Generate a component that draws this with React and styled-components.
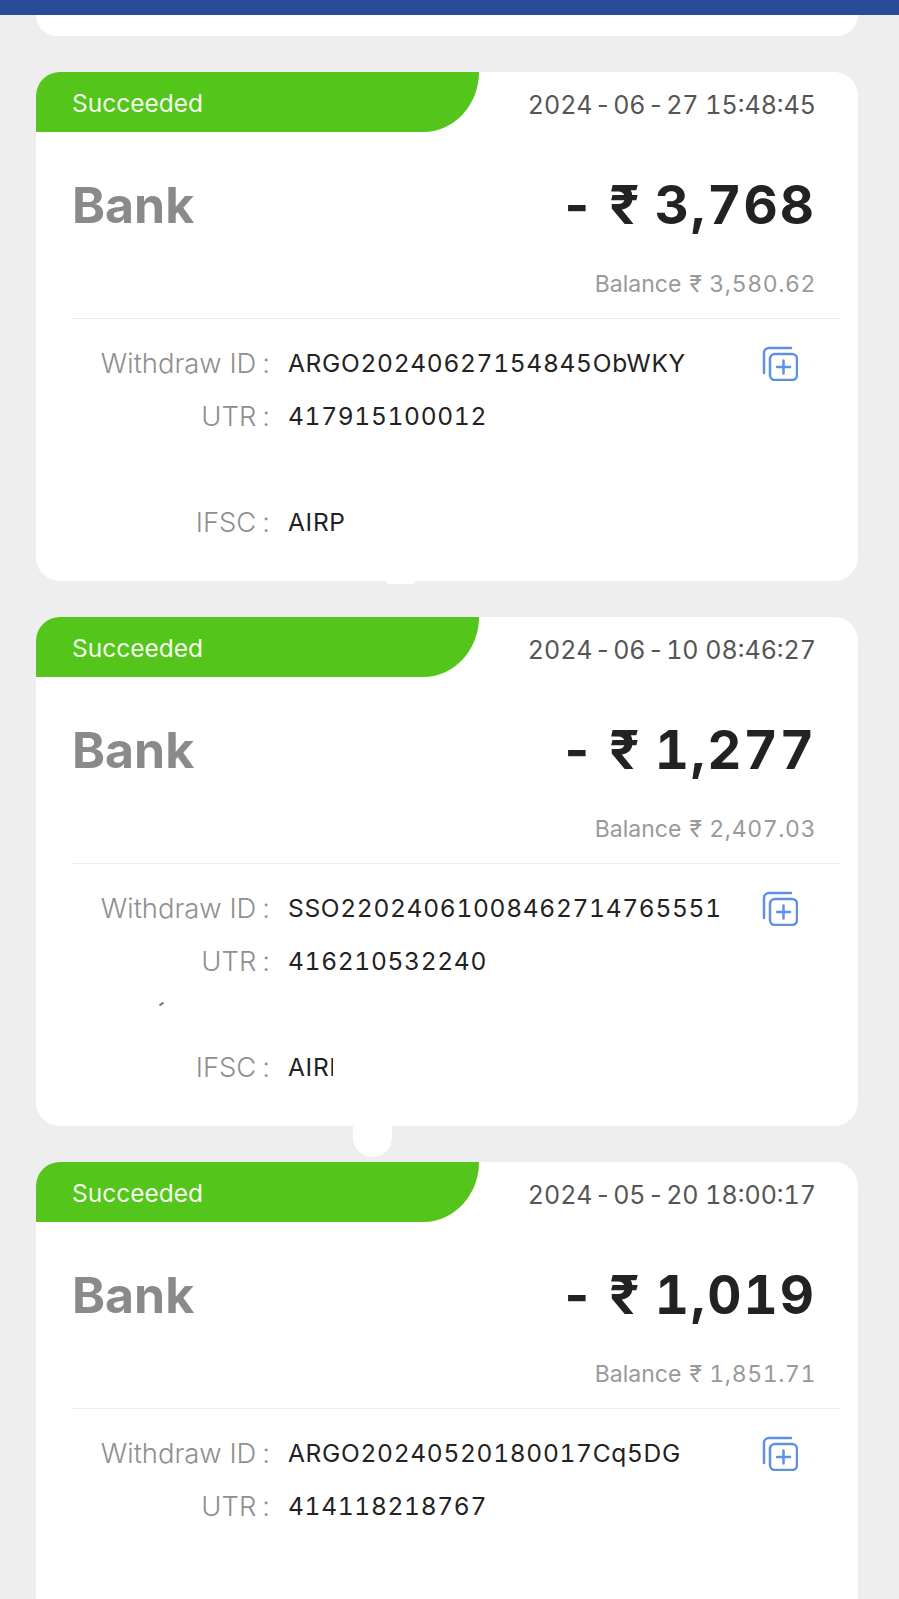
import React from "react";
import styled, { createGlobalStyle } from "styled-components";

const GlobalStyle = createGlobalStyle`
  html, body {
    margin: 0;
    height: 1599px;
    overflow: hidden;
    background: #eeeeee;
    font-family: "Inter", "Noto Sans", "DejaVu Sans", sans-serif;
  }
`;

const TopBar = styled.div`
  height: 15px;
  background: #2a4b96;
`;

const List = styled.div`
  display: flex;
  flex-direction: column;
  gap: 36px;
  padding: 0 41px 0 36px;
`;

const CardEnd = styled.div`
  height: 21px;
  background: #fff;
  border-radius: 0 0 24px 24px;
`;

const Card = styled.section`
  position: relative;
  flex: none;
  height: 509px;
  background: #fff;
  border-radius: 24px;
`;

const Header = styled.header`
  display: flex;
  justify-content: space-between;
  align-items: center;
  height: 60px;
  padding-right: 42px;
`;

const Status = styled.div`
  display: flex;
  align-items: center;
  box-sizing: border-box;
  width: 443px;
  height: 60px;
  padding: 2px 0 0 36px;
  background: #54c51a;
  color: #f2fbe9;
  font-size: 24.5px;
  border-top-left-radius: 24px;
  border-bottom-right-radius: 56px 60px;
`;

const DateText = styled.span`
  margin-top: 6px;
  color: #555;
  font-size: 25px;
  font-variant-numeric: tabular-nums;
`;

const Dash = styled.span`
  margin: 0 2.2px;
`;

const MainRow = styled.div`
  display: flex;
  justify-content: space-between;
  align-items: center;
  height: 80px;
  margin-top: 33px;
  padding: 0 42px 0 36px;
`;

const Channel = styled.span`
  color: #8a8a8a;
  font-size: 50px;
  font-weight: 700;
`;

const Amount = styled.span`
  color: #222;
  font-size: 53px;
  font-weight: 700;
  letter-spacing: 2px;
  word-spacing: -3px;
  font-variant-numeric: tabular-nums;
`;

const Balance = styled.div`
  margin-top: 24px;
  padding-right: 42px;
  text-align: right;
  color: #999;
  font-size: 23px;
  line-height: 30px;
  font-variant-numeric: tabular-nums;
`;

const BalanceValue = styled.span`
  margin-left: 2px;
  letter-spacing: 0.6px;
`;

const Divider = styled.hr`
  margin: 19px 18px 17px 36px;
  border: 0;
  border-top: 1px solid #eee;
`;

const Row = styled.div`
  display: flex;
  align-items: center;
  height: 53px;
`;

const Label = styled.span`
  flex: none;
  width: 234px;
  text-align: right;
  color: #8f8f8f;
  font-size: 27.4px;
  font-weight: 300;
`;

const Colon = styled.span`
  margin-left: 6px;
`;

const Value = styled.span`
  flex: none;
  margin-left: 18px;
  max-width: ${(props) => props.$clip || "none"};
  overflow: hidden;
  white-space: nowrap;
  color: #222;
  font-size: 24.5px;
  letter-spacing: 0.7px;
  font-variant-numeric: tabular-nums;
`;

const CopyIcon = styled.svg`
  flex: none;
  width: 36px;
  height: 36px;
  margin-left: auto;
  margin-right: 60px;
  fill: none;
  stroke: #5f90e2;
  stroke-width: 2.5;
  stroke-linecap: round;
`;

const Blob = styled.div`
  position: absolute;
  top: 100%;
  left: ${(props) => props.$left}px;
  width: ${(props) => props.$size}px;
  height: ${(props) => props.$height}px;
  background: #fff;
  border-radius: 0 0 ${(props) => props.$size / 2}px ${(props) => props.$size / 2}px;
`;

const Speck = styled.i`
  position: absolute;
  left: 123px;
  top: 386px;
  width: 5px;
  height: 2px;
  background: #777;
  transform: rotate(-35deg);
`;

const Copy = () => (
  <CopyIcon viewBox="0 0 36 36">
    <path d="M29 3H7a5 5 0 0 0-5 5v20" />
    <rect x="8" y="9" width="27" height="26" rx="5" />
    <path d="M21.5 15.5v13M15 22h13" />
  </CopyIcon>
);

const records = [
  {
    date: "2024-06-27",
    time: "15:48:45",
    amount: "3,768",
    balance: "3,580.62",
    id: "ARGO20240627154845ObWKY",
    utr: "417915100012",
    ifsc: "AIRP",
    blob: { left: 350, size: 29, height: 3 },
  },
  {
    date: "2024-06-10",
    time: "08:46:27",
    amount: "1,277",
    balance: "2,407.03",
    id: "SSO22024061008462714765551",
    utr: "416210532240",
    ifsc: "AIRP",
    clip: "45px",
    speck: true,
    blob: { left: 317, size: 39, height: 31 },
  },
  {
    date: "2024-05-20",
    time: "18:00:17",
    amount: "1,019",
    balance: "1,851.71",
    id: "ARGO20240520180017Cq5DG",
    utr: "414118218767",
  },
];

export default function App() {
  return (
    <>
      <GlobalStyle />
      <TopBar />
      <List>
        <CardEnd />
        {records.map((r) => {
          const [year, month, day] = r.date.split("-");
          return (
            <Card key={r.id}>
              <Header>
                <Status>Succeeded</Status>
                <DateText>
                  {year}<Dash>-</Dash>{month}<Dash>-</Dash>{day} {r.time}
                </DateText>
              </Header>
              <MainRow>
                <Channel>Bank</Channel>
                <Amount>- ₹ {r.amount}</Amount>
              </MainRow>
              <Balance>
                Balance <BalanceValue>₹ {r.balance}</BalanceValue>
              </Balance>
              <Divider />
              <Row>
                <Label>Withdraw ID<Colon>:</Colon></Label>
                <Value>{r.id}</Value>
                <Copy />
              </Row>
              <Row>
                <Label>UTR<Colon>:</Colon></Label>
                <Value>{r.utr}</Value>
              </Row>
              <Row />
              {r.ifsc && (
                <Row>
                  <Label>IFSC<Colon>:</Colon></Label>
                  <Value $clip={r.clip}>{r.ifsc}</Value>
                </Row>
              )}
              {r.speck && <Speck />}
              {r.blob && <Blob $left={r.blob.left} $size={r.blob.size} $height={r.blob.height} />}
            </Card>
          );
        })}
      </List>
    </>
  );
}
